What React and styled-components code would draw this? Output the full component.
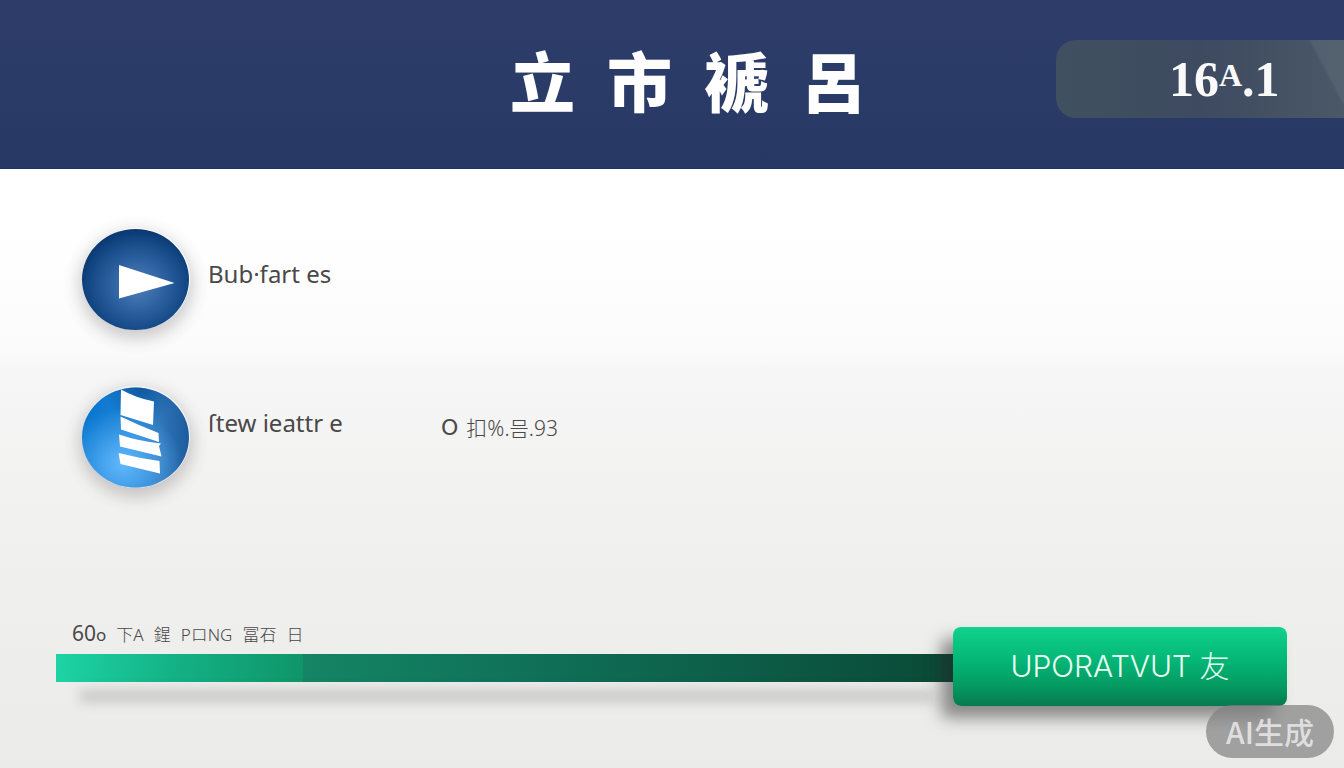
import React from 'react';
import styled, { createGlobalStyle } from 'styled-components';

const features = [
  { id: 'play', label: 'Bub·fart es' },
  { id: 'stack', label: 'ſtew ieattr e', raised: true, detail: '扣%.믐.93' },
];

const PlayIcon = () => (
  <svg width="108" height="102" viewBox="0 0 108 102" aria-hidden="true">
    <defs>
      <radialGradient id="play-fill" cx="0.52" cy="0.56" r="0.54">
        <stop offset="0" stopColor="#4f7fb8" />
        <stop offset="0.5" stopColor="#2a5f9f" />
        <stop offset="0.85" stopColor="#134784" />
        <stop offset="1" stopColor="#0b3a74" />
      </radialGradient>
    </defs>
    <ellipse cx="53.5" cy="51.5" rx="53.5" ry="50.5" fill="url(#play-fill)" />
    <path d="M37 37 92.500 55 37 70.500Z" fill="#fff" />
  </svg>
);

const StackIcon = () => (
  <svg width="108" height="102" viewBox="0 0 108 102" aria-hidden="true">
    <defs>
      <linearGradient id="stack-fill" x1="0.1" y1="0.4" x2="1" y2="0.35">
        <stop offset="0" stopColor="#0b78d0" />
        <stop offset="0.35" stopColor="#1a80d4" />
        <stop offset="0.7" stopColor="#2f76b9" />
        <stop offset="1" stopColor="#1b5b9d" />
      </linearGradient>
      <radialGradient id="stack-glow" cx="0.38" cy="0.76" r="0.55">
        <stop offset="0" stopColor="#62b8fb" />
        <stop offset="1" stopColor="#62b8fb" stopOpacity="0" />
      </radialGradient>
      <radialGradient id="stack-shade" cx="0.55" cy="0" r="0.35">
        <stop offset="0" stopColor="#0a4f94" stopOpacity="0.8" />
        <stop offset="1" stopColor="#0a4f94" stopOpacity="0" />
      </radialGradient>
    </defs>
    <ellipse cx="53.5" cy="51.500" rx="53.5" ry="50" fill="url(#stack-fill)" />
    <ellipse cx="53.5" cy="51.500" rx="53.5" ry="50" fill="url(#stack-glow)" />
    <ellipse cx="53.5" cy="51.500" rx="53.5" ry="50" fill="url(#stack-shade)" />
    <path
      d="M39 3.500Q54 12 72 15.500L71 39 38.500 29ZM38.500 30.500Q56 39 76.500 47L77 56 39 43.500ZM37 48.500Q56 55 79 57.500L77 60 79.500 70.500 38 60.500ZM36.500 67Q56 72 77.500 75L78 87.500 38.500 78Z"
      fill="#fff"
    />
  </svg>
);

const icons = { play: PlayIcon, stack: StackIcon };

const Feature = ({ id, label, detail, raised }) => {
  const Icon = icons[id];
  return (
    <FeatureRow>
      <IconHolder>
        <Icon />
      </IconHolder>
      <FeatureLabel $raised={raised}>{label}</FeatureLabel>
      {detail && (
        <FeatureDetail>
          <span className="mark">O</span>
          <span>{detail}</span>
        </FeatureDetail>
      )}
    </FeatureRow>
  );
};

const App = () => (
  <Page>
    <GlobalStyle />
    <Header>
      <Title>
        <span>立</span>
        <span>市</span>
        <span>褫</span>
        <span>呂</span>
      </Title>
      <Version>
        16<small>A</small>.1
      </Version>
    </Header>
    <Main>
      <FeatureList>
        {features.map((feature) => (
          <Feature key={feature.id} {...feature} />
        ))}
      </FeatureList>
    </Main>
    <Footer>
      <ProgressGroup>
        <ProgressLabel htmlFor="update-progress">
          <span className="amount">60</span>
          <span className="unit">o</span>
          <span className="word">下A</span>
          <span className="word">鍟</span>
          <span className="word">PロNG</span>
          <span className="word">冨䂖</span>
          <span className="word">日</span>
        </ProgressLabel>
        <ProgressTrack>
          <ProgressBar id="update-progress" value="27.5" max="100" />
        </ProgressTrack>
      </ProgressGroup>
      <UpdateButton type="button">UPORATVUT 友</UpdateButton>
    </Footer>
    <Badge>AI生成</Badge>
  </Page>
);

const GlobalStyle = createGlobalStyle`
  * {
    box-sizing: border-box;
  }

  body {
    margin: 0;
    font-family: "Noto Sans", "Noto Sans CJK SC", "Noto Sans CJK KR", sans-serif;
    color: #4a4848;
  }
`;

const Page = styled.div`
  position: relative;
  display: flex;
  flex-direction: column;
  min-height: 100vh;
  background: linear-gradient(
    #fff 0,
    #fff 30%,
    #fbfbfb 46%,
    #f6f6f6 48%,
    #f0f0ef 72%,
    #ebebea 100%
  );
`;

const Header = styled.header`
  display: grid;
  grid-template-columns: 1fr auto 1fr;
  align-items: center;
  padding: 32px 0 42px 32px;
  border-bottom: 1px solid #1f3263;
  background: linear-gradient(#2d3c69, #2b3b68 55%, #263863);
`;

const Title = styled.h1`
  grid-column: 2;
  display: flex;
  gap: 32px;
  margin: 0;
  font-family: "Noto Sans CJK SC", sans-serif;
  font-size: 65px;
  font-weight: 900;
  line-height: 94px;
  color: #fff;
`;

const Version = styled.div`
  justify-self: end;
  width: 288px;
  padding-left: 113px;
  border-radius: 20px 0 0 20px;
  background: linear-gradient(62deg, transparent 89%, rgba(255, 255, 255, 0.06) 90%),
    linear-gradient(90deg, #415060, #3d4a60 50%, #4a5867);
  font-family: "Liberation Serif", serif;
  font-size: 50px;
  font-weight: 700;
  line-height: 78px;
  color: #fafafa;

  small {
    font-size: 32px;
    vertical-align: 10px;
    line-height: 1;
  }
`;

const Main = styled.main`
  flex: 1;
  padding: 59px 82px;
`;

const FeatureList = styled.ul`
  display: flex;
  flex-direction: column;
  gap: 56px;
  margin: 0;
  padding: 0;
  list-style: none;
`;

const FeatureRow = styled.li`
  display: flex;
  align-items: center;
`;

const IconHolder = styled.div`
  display: flex;
  margin-right: 18px;
  border-radius: 50%;
  box-shadow: 0 6px 16px 3px rgba(60, 50, 50, 0.24);
`;

const FeatureLabel = styled.span`
  width: 233px;
  padding-bottom: ${({ $raised }) => ($raised ? '28px' : '10px')};
  font-size: 24px;
  line-height: 32px;
`;

const FeatureDetail = styled.span`
  display: flex;
  align-items: center;
  gap: 8px;
  padding-bottom: 18px;
  font-size: 21px;
  font-weight: 300;
  line-height: 24px;

  .mark {
    font-family: "DejaVu Sans", sans-serif;
    font-size: 22px;
    font-weight: 400;
  }
`;

const Footer = styled.footer`
  display: flex;
  align-items: flex-end;
  padding: 0 57px 62px 56px;
`;

const ProgressGroup = styled.div`
  flex: 1;
  padding-bottom: 24px;
`;

const ProgressLabel = styled.label`
  display: flex;
  align-items: baseline;
  margin-bottom: 6px;
  padding-left: 16px;
  font-size: 17px;
  font-weight: 300;
  line-height: 26px;

  .amount {
    font-size: 21px;
    font-weight: 400;
  }

  .unit {
    font-weight: 400;
  }

  .word {
    margin-left: 10px;
  }
`;

const ProgressTrack = styled.div`
  position: relative;

  &::after {
    content: "";
    position: absolute;
    left: 24px;
    right: 20px;
    top: 36px;
    height: 12px;
    background: rgba(80, 80, 80, 0.24);
    filter: blur(6px);
  }
`;

const ProgressBar = styled.progress`
  display: block;
  width: 100%;
  height: 28px;
  border: none;
  appearance: none;

  &::-webkit-progress-bar {
    background: linear-gradient(90deg, #158765 25%, #10735a 50%, #0a4936);
  }

  &::-webkit-progress-value {
    background: linear-gradient(95deg, #1dd4a5, #13b084 50%, #0f9569);
  }
`;

const UpdateButton = styled.button`
  position: relative;
  width: 334px;
  padding: 0;
  border: none;
  border-radius: 8px;
  background: linear-gradient(#10d28d, #05b877 40%, #049a62 75%, #067a4e);
  box-shadow: -12px 12px 16px 0 rgba(40, 40, 40, 0.5);
  font-family: Inter, "Noto Sans CJK SC", sans-serif;
  font-size: 30px;
  font-weight: 300;
  line-height: 79px;
  color: #e9fff2;
`;

const Badge = styled.div`
  position: absolute;
  right: 10px;
  bottom: 10px;
  padding: 0 20px;
  border-radius: 27px;
  background: rgba(128, 128, 128, 0.7);
  font-family: "Noto Sans CJK SC", sans-serif;
  font-size: 30px;
  font-weight: 500;
  line-height: 53px;
  color: #dedede;
`;

export default App;
